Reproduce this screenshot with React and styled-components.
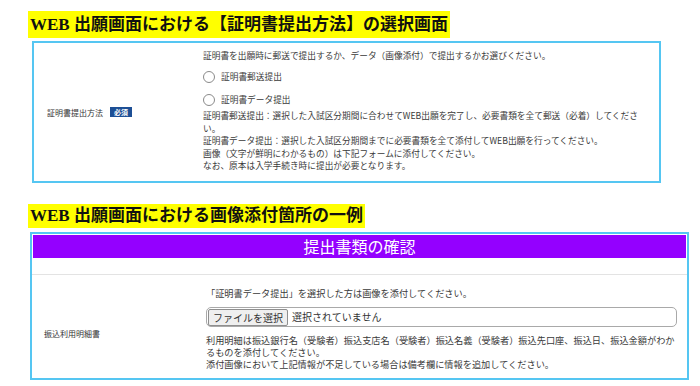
import React from "react"
import styled, { createGlobalStyle } from "styled-components"

const GlobalStyle = createGlobalStyle`
  body {
    margin: 0;
    background: #fff;
    font-family: "Noto Sans CJK JP", "Noto Sans", sans-serif;
    color: #333;
  }
`

const Page = styled.div`
  width: 700px;
  height: 386px;
  overflow: hidden;
  box-sizing: border-box;
  padding: 11px 0 0 28px;
  display: flex;
  flex-direction: column;
  align-items: flex-start;
`

const Heading = styled.h2`
  margin: ${p => p.$top || 0}px 0 0 0;
  padding: 0 2px;
  height: ${p => p.$h}px;
  line-height: ${p => p.$h}px;
  background: #ffff00;
  color: #111;
  font-family: "Liberation Serif", "Noto Sans CJK JP", serif;
  font-weight: bold;
  font-size: 17px;
  white-space: nowrap;
`

const Frame = styled.div`
  box-sizing: border-box;
  margin: ${p => p.$top}px 0 0 ${p => p.$left}px;
  width: ${p => p.$w}px;
  height: ${p => p.$h}px;
  border: 2px solid #55c6f2;
  background: #fff;
  display: flex;
  flex-direction: column;
`

const Row = styled.div`
  display: grid;
  grid-template-columns: ${p => p.$labelW}px 1fr;
  flex: 1;
`

const Label = styled.div`
  display: flex;
  align-items: center;
  padding: ${p => p.$pt || 0}px 0 0 ${p => p.$pl}px;
  font-size: 8px;
  color: #333;
  white-space: nowrap;
`

const Badge = styled.span`
  margin-left: 7px;
  padding: 0 4px;
  height: 10px;
  line-height: 10px;
  background: #1d4f95;
  color: #fff;
  font-size: 7px;
  font-weight: bold;
`

const Body = styled.div`
  padding: ${p => p.$pt}px ${p => p.$pr}px 0 0;
  display: flex;
  flex-direction: column;
  font-size: ${p => p.$fs}px;
  line-height: ${p => p.$lh}px;
  color: #3a3a3a;
`

const Line = styled.div`
  margin-top: ${p => p.$mt || 0}px;
`

const RadioRow = styled.label`
  display: flex;
  align-items: center;
  gap: 6px;
  margin-top: ${p => p.$mt}px;
  height: 14px;
`

const Circle = styled.span`
  width: 10px;
  height: 10px;
  border: 1px solid #8a8a8a;
  border-radius: 50%;
  background: #fff;
`

const Header = styled.div`
  margin: 1px;
  height: 23px;
  background: #9400ff;
  color: #fff;
  font-size: 16px;
  line-height: 23px;
  text-align: center;
`

const Spacer = styled.div`
  height: 15px;
  border-bottom: 1px solid #e3e3e3;
`

const FileBox = styled.div`
  margin: 8px 0 7px 0;
  height: 20px;
  box-sizing: border-box;
  border: 1px solid #a9a9a9;
  border-radius: 5px;
  display: flex;
  align-items: center;
  padding-left: 1px;
  font-size: 10px;
  color: #333;
`

const FileButton = styled.span`
  height: 17px;
  line-height: 16px;
  box-sizing: border-box;
  padding: 0 4px;
  margin-right: 4px;
  border: 1px solid #8f8f8f;
  border-radius: 2px;
  background: #efefef;
  font-size: 10px;
`

export default function App() {
  return (
    <>
      <GlobalStyle />
      <Page>
        <Heading $h={27}>WEB 出願画面における【証明書提出方法】の選択画面</Heading>
        <Frame $top={3} $left={4} $w={629} $h={142}>
          <Row $labelW={169}>
            <Label $pl={13}>
              証明書提出方法<Badge>必須</Badge>
            </Label>
            <Body $pt={7} $pr={14} $fs={8.7} $lh={12.4}>
              <Line>証明書を出願時に郵送で提出するか、データ（画像添付）で提出するかお選びください。</Line>
              <RadioRow $mt={8}>
                <Circle />証明書郵送提出
              </RadioRow>
              <RadioRow $mt={9}>
                <Circle />証明書データ提出
              </RadioRow>
              <Line $mt={3}>証明書郵送提出：選択した入試区分期間に合わせてWEB出願を完了し、必要書類を全て郵送（必着）してください。</Line>
              <Line>証明書データ提出：選択した入試区分期間までに必要書類を全て添付してWEB出願を行ってください。</Line>
              <Line>画像（文字が鮮明にわかるもの）は下記フォームに添付してください。</Line>
              <Line>なお、原本は入学手続き時に提出が必要となります。</Line>
            </Body>
          </Row>
        </Frame>

        <Heading $top={21} $h={24}>WEB 出願画面における画像添付箇所の一例</Heading>
        <Frame $top={4} $left={2} $w={659} $h={148}>
          <Header>提出書類の確認</Header>
          <Spacer />
          <Row $labelW={174}>
            <Label $pl={12} $pt={14}>振込利用明細書</Label>
            <Body $pt={12} $pr={10} $fs={9.2} $lh={12}>
              <Line>「証明書データ提出」を選択した方は画像を添付してください。</Line>
              <FileBox>
                <FileButton>ファイルを選択</FileButton>選択されていません
              </FileBox>
              <Line>利用明細は振込銀行名（受験者）振込支店名（受験者）振込名義（受験者）振込先口座、振込日、振込金額がわかるものを添付してください。</Line>
              <Line>添付画像において上記情報が不足している場合は備考欄に情報を追加してください。</Line>
            </Body>
          </Row>
        </Frame>
      </Page>
    </>
  )
}
